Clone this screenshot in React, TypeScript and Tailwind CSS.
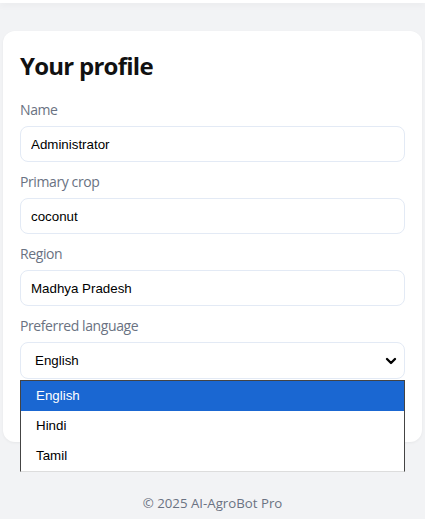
import { ChevronDown } from "lucide-react";

const fields = [
  { label: "Name", value: "Administrator" },
  { label: "Primary crop", value: "coconut" },
  { label: "Region", value: "Madhya Pradesh" },
];

const languages = ["English", "Hindi", "Tamil"];

function Field({ label, value }: { label: string; value: string }) {
  return (
    <div className="flex flex-col">
      <label className="mb-1.5 text-sm leading-5 tracking-[-0.4px] text-gray-500">{label}</label>
      <input
        readOnly
        value={value}
        className="h-9 rounded-lg border border-[#e3eaf5] bg-white px-[10px] text-[13.33px] text-black outline-none [font-family:'Liberation_Sans',Arial,sans-serif]"
      />
    </div>
  );
}

export default function App() {
  return (
    <div className="flex min-h-[519px] flex-col bg-[#f2f3f5] [font-family:'Open_Sans','Noto_Sans',sans-serif]">
      <header className="h-[3px] bg-white shadow-[0_2px_6px_rgba(0,0,0,0.06)]" />

      <main className="px-[3px] pt-7">
        <section className="rounded-xl bg-white px-[17px] pb-5 pt-5 shadow-[0_1px_3px_rgba(0,0,0,0.05)]">
          <h1 className="mb-[19px] text-2xl leading-[30px] font-bold tracking-[-0.75px] text-[#111111]">
            Your profile
          </h1>

          <div className="flex flex-col gap-2.5">
            {fields.map((f) => (
              <Field key={f.label} label={f.label} value={f.value} />
            ))}

            <div className="relative flex flex-col">
              <label className="mb-1.5 text-sm leading-5 tracking-[-0.4px] text-gray-500">
                Preferred language
              </label>
              <div className="flex h-[37px] items-center justify-between rounded-lg border border-[#e3eaf5] bg-white pl-[14px] pr-[5px] text-[13.33px] text-black [font-family:'Liberation_Sans',Arial,sans-serif]">
                <span>English</span>
                <ChevronDown className="h-4 w-4" strokeWidth={3.5} />
              </div>

              {/* open native list */}
              <ul className="absolute left-0 right-0 top-[64px] z-10 border border-[#444] border-b-[#ddd] bg-white text-[13.33px] text-black [font-family:'Liberation_Sans',Arial,sans-serif]">
                {languages.map((l, i) => (
                  <li
                    key={l}
                    className={`flex h-[30px] items-center pl-[15px] ${i === 0 ? "bg-[#1a67d2] text-white" : ""}`}
                  >
                    {l}
                  </li>
                ))}
              </ul>
            </div>

            <div className="h-[33px]" />
          </div>
        </section>
      </main>

      <footer className="mt-auto pb-[6px] text-center text-[13.25px] leading-5 text-gray-500">
        © 2025 AI-AgroBot Pro
      </footer>
    </div>
  );
}
